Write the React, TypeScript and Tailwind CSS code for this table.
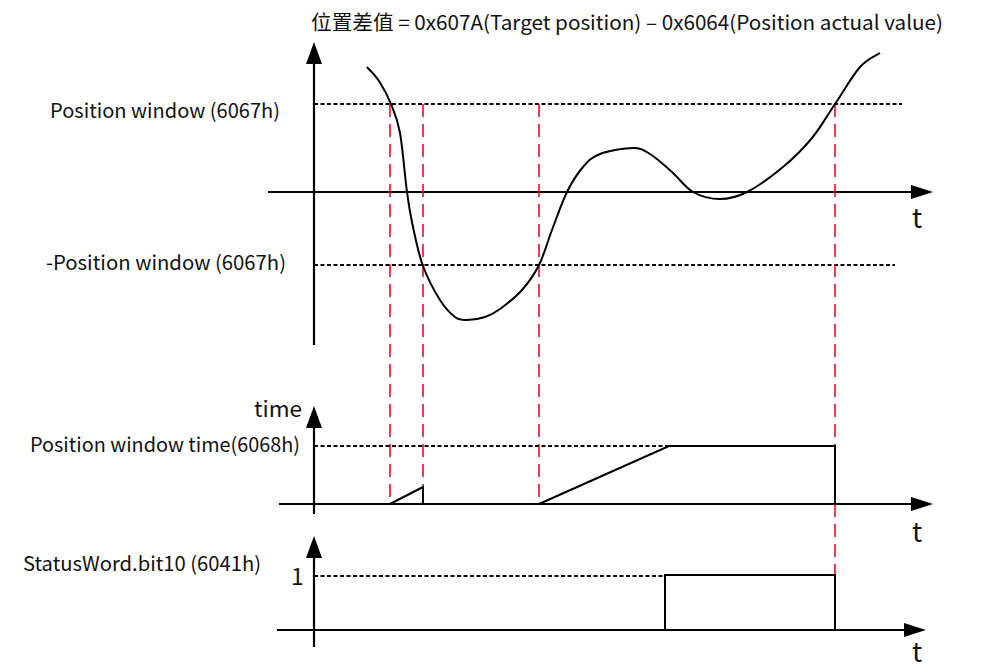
import React from 'react';

type Pt = [number, number];

// catmull-rom -> cubic bezier path
const smoothPath = (pts: Pt[]) => {
  let d = `M${pts[0][0]},${pts[0][1]}`;
  for (let i = 0; i < pts.length - 1; i++) {
    const p0 = pts[i - 1] || pts[i];
    const p1 = pts[i];
    const p2 = pts[i + 1];
    const p3 = pts[i + 2] || p2;
    const c1x = p1[0] + (p2[0] - p0[0]) / 6;
    const c1y = p1[1] + (p2[1] - p0[1]) / 6;
    const c2x = p2[0] - (p3[0] - p1[0]) / 6;
    const c2y = p2[1] - (p3[1] - p1[1]) / 6;
    d += ` C${c1x},${c1y} ${c2x},${c2y} ${p2[0]},${p2[1]}`;
  }
  return d;
};

const curve: Pt[] = [
  [367, 67], [379, 81], [391, 104], [400, 133], [407, 192], [413, 227],
  [423, 266], [440, 300], [455, 317], [467, 320], [485, 317], [500, 309],
  [522, 290], [539, 265], [552, 230], [567, 192], [583, 167], [600, 154],
  [633, 148], [650, 154], [672, 172], [693, 192], [720, 199], [747, 192],
  [783, 167], [812, 138], [835, 104], [860, 67], [880, 53],
];

const Dotted = ({ x1, x2, y }: { x1: number; x2: number; y: number }) => (
  <line x1={x1} x2={x2} y1={y} y2={y} stroke="#000" strokeWidth={2} strokeDasharray="4 2.5" />
);

const RedDash = ({ x, y1, y2 }: { x: number; y1: number; y2: number }) => (
  <line x1={x} x2={x} y1={y1} y2={y2} stroke="#e8101c" strokeWidth={1.6} strokeDasharray="13 7" />
);

const UpArrow = ({ x, tip, base }: { x: number; tip: number; base: number }) => (
  <polygon points={`${x},${tip} ${x - 8},${base} ${x + 8},${base}`} fill="#000" />
);

const RightArrow = ({ y, tip, base }: { y: number; tip: number; base: number }) => (
  <polygon points={`${tip},${y} ${base},${y - 7} ${base},${y + 7}`} fill="#000" />
);

const Label = ({ x, y, w, size = 20, children }: { x: number; y: number; w?: number; size?: number; children: React.ReactNode }) => (
  <text x={x} y={y} fontSize={size} fill="#111" textLength={w} lengthAdjust="spacingAndGlyphs">
    {children}
  </text>
);

export default function App() {
  return (
    <div className="w-[1001px] h-[672px] bg-white overflow-hidden font-['Noto_Sans_CJK_SC','Noto_Sans',sans-serif]">
      <svg width={1001} height={672} viewBox="0 0 1001 672">
        <Label x={311} y={30} w={632}>
          位置差值 = 0x607A(Target position) – 0x6064(Position actual value)
        </Label>

        {/* panel 1 */}
        <Dotted x1={314} x2={902} y={104} />
        <Dotted x1={314} x2={895} y={265} />
        <line x1={314} x2={314} y1={60} y2={345} stroke="#000" strokeWidth={2.2} />
        <UpArrow x={314} tip={42} base={64} />
        <line x1={268} x2={915} y1={192} y2={192} stroke="#000" strokeWidth={2.2} />
        <RightArrow y={192} tip={933} base={911} />
        <Label x={50} y={118} w={230}>Position window (6067h)</Label>
        <Label x={46} y={270} w={240}>-Position window (6067h)</Label>
        <Label x={912} y={228} size={27}>t</Label>

        {/* red markers */}
        <RedDash x={390} y1={104} y2={504} />
        <RedDash x={423} y1={104} y2={504} />
        <RedDash x={539} y1={104} y2={504} />
        <RedDash x={835} y1={104} y2={575} />

        <path d={smoothPath(curve)} fill="none" stroke="#000" strokeWidth={2} />

        {/* panel 2 */}
        <Dotted x1={314} x2={668} y={446} />
        <line x1={314} x2={314} y1={425} y2={514} stroke="#000" strokeWidth={2.2} />
        <UpArrow x={314} tip={406} base={428} />
        <line x1={279} x2={915} y1={504} y2={504} stroke="#000" strokeWidth={2.2} />
        <RightArrow y={504} tip={933} base={911} />
        <polyline points="390,504 423,487 423,504" fill="none" stroke="#000" strokeWidth={2} />
        <polyline points="539,504 669,446 835,446 835,504" fill="none" stroke="#000" strokeWidth={2} />
        <Label x={254} y={417} w={48} size={22}>time</Label>
        <Label x={30} y={452} w={270}>Position window time(6068h)</Label>
        <Label x={912} y={542} size={27}>t</Label>

        {/* panel 3 */}
        <Dotted x1={314} x2={665} y={576} />
        <line x1={314} x2={314} y1={555} y2={647} stroke="#000" strokeWidth={2.2} />
        <UpArrow x={314} tip={536} base={558} />
        <line x1={277} x2={908} y1={630} y2={630} stroke="#000" strokeWidth={2.2} />
        <RightArrow y={630} tip={926} base={904} />
        <polyline points="665,630 665,575 835,575 835,630" fill="none" stroke="#000" strokeWidth={2} />
        <Label x={23} y={571} w={238}>StatusWord.bit10 (6041h)</Label>
        <Label x={291} y={585} size={23}>1</Label>
        <Label x={912} y={662} size={27}>t</Label>
      </svg>
    </div>
  );
}
